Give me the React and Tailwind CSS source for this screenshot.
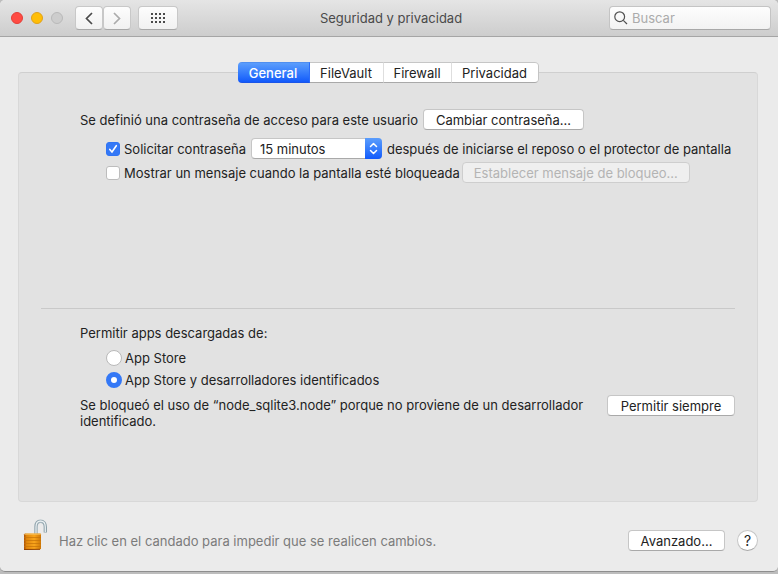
import { useState } from 'react';

const TABS = [
  { name: 'General', width: 'w-[72px]' },
  { name: 'FileVault', width: 'w-[74px]' },
  { name: 'Firewall', width: 'w-[68px]' },
  { name: 'Privacidad', width: 'w-[87px]' },
];

const SOURCES = ['App Store', 'App Store y desarrolladores identificados'];

function PushButton({ className, children, ...props }) {
  return (
    <button
      type="button"
      className={`h-[21px] shrink-0 whitespace-nowrap rounded-[4px] border border-[#c6c6c6] border-b-[#a9a9a9] bg-white text-center leading-4 text-[#222] disabled:border-[#cecece] disabled:bg-[#efefef] disabled:text-[#b4b4b4] ${className}`}
      {...props}
    >
      {children}
    </button>
  );
}

function ToolButton({ className, children, ...props }) {
  return (
    <button
      type="button"
      className={`flex h-6 items-center justify-center rounded-[4px] border border-[#c8c8c8] border-b-[#a8a8a8] bg-linear-to-b from-[#fdfdfd] to-[#f1f1f1] ${className}`}
      {...props}
    >
      {children}
    </button>
  );
}

function Toolbar() {
  return (
    <header className="grid h-[37px] grid-cols-[1fr_auto_1fr] items-center border-b border-[#a5a5a5] bg-linear-to-b from-[#e5e5e5] to-[#cdcdcd] pl-[11px] pr-[7px]">
      <div className="flex items-center">
        <div className="flex gap-2">
          <button type="button" aria-label="Cerrar" className="size-3 rounded-full border border-[#e33e38] bg-[#ff4b43]" />
          <button type="button" aria-label="Minimizar" className="size-3 rounded-full border border-[#e0a11a] bg-[#ffbe07]" />
          <button type="button" aria-label="Ampliar" disabled className="size-3 rounded-full border border-[#b9b9b9] bg-[#cdcdcd]" />
        </div>
        <div className="ml-3 flex">
          <ToolButton className="w-7" aria-label="Atrás">
            <svg width="8" height="13" viewBox="0 0 8 13" fill="none" stroke="#4a4a4a" strokeWidth="1.7">
              <path d="M7 1 1.5 6.5 7 12" />
            </svg>
          </ToolButton>
          <ToolButton className="w-7" aria-label="Adelante">
            <svg width="8" height="13" viewBox="0 0 8 13" fill="none" stroke="#ababab" strokeWidth="1.7">
              <path d="M1 1 6.5 6.5 1 12" />
            </svg>
          </ToolButton>
        </div>
        <ToolButton className="ml-[7px] w-10" aria-label="Mostrar todo">
          <svg width="14" height="10" viewBox="0 0 14 10" fill="#4a4a4a">
            {[0, 4, 8].map((y) =>
              [0, 4, 8, 12].map((x) => <rect key={`${x}-${y}`} x={x} y={y} width="2" height="2" />)
            )}
          </svg>
        </ToolButton>
      </div>
      <h1 className="text-[#4a4a4a]">Seguridad y privacidad</h1>
      <label className="flex h-6 w-[162px] items-center gap-1 justify-self-end rounded-[4px] border border-[#c4c4c4] border-b-[#a8a8a8] bg-linear-to-b from-[#fdfdfd] to-[#f2f2f2] pl-1">
        <svg width="14" height="14" viewBox="0 0 14 14" fill="none" stroke="#505050" strokeWidth="1.2" className="shrink-0">
          <circle cx="5.7" cy="5.7" r="4.9" />
          <path d="m9.3 9.3 3.7 3.7" />
        </svg>
        <input
          type="search"
          aria-label="Buscar"
          placeholder="Buscar"
          className="w-full min-w-0 bg-transparent outline-none placeholder:text-[#ababab]"
        />
      </label>
    </header>
  );
}

function CheckBox({ label, checked, onChange }) {
  return (
    <label className="flex shrink-0 items-center gap-1 whitespace-nowrap">
      <span className="grid size-[14px] place-items-center">
        <input
          type="checkbox"
          checked={checked}
          onChange={onChange}
          className="col-start-1 row-start-1 size-[14px] appearance-none rounded-[3px] border border-[#bdbdbd] bg-white checked:border-[#2f74f5] checked:bg-[#3478f6]"
        />
        {checked && (
          <svg width="10" height="10" viewBox="0 0 10 10" fill="none" stroke="#fff" strokeWidth="1.6" strokeLinecap="round" className="pointer-events-none col-start-1 row-start-1">
            <path d="M1.8 5.4 4 8 8.3 1.7" />
          </svg>
        )}
      </span>
      {label}
    </label>
  );
}

function Padlock() {
  return (
    <svg width="26" height="32" viewBox="0 0 26 32">
      <defs>
        <linearGradient id="brass" x1="0" x2="1" y1="0" y2="0">
          <stop offset="0" stopColor="#a84e08" />
          <stop offset="0.15" stopColor="#e0860c" />
          <stop offset="0.6" stopColor="#f9a51c" />
          <stop offset="1" stopColor="#cf7806" />
        </linearGradient>
        <linearGradient id="steel" x1="0" x2="1" y1="0" y2="0">
          <stop offset="0" stopColor="#8fa3ac" />
          <stop offset="0.5" stopColor="#a9b9c0" />
          <stop offset="1" stopColor="#8ba0a8" />
        </linearGradient>
      </defs>
      <path d="M14 16V8C14 4.300 15.500 2.200 18.500 2.200S23.300 4.500 23.300 8v5.500" fill="none" stroke="url(#steel)" strokeWidth="3.400" />
      <path d="M14 15V8C14 4.300 15.500 2.200 18.500 2.200S23.300 4.500 23.300 8v5" fill="none" stroke="#edf2f4" strokeWidth="1.200" />
      <path d="M2 15.500 3 14.500H18.500L19 15.500V29.500L18 30.500 2 31Z" fill="url(#brass)" />
      <path d="M2 18.500H19M2 21.500H19M2 24.500H19M2 27.500H19" stroke="#c47308" strokeWidth="0.700" />
      <path d="M2.500 15.200H18.800" stroke="#f7c05a" strokeWidth="1" />
      <path d="M2 30.500 18 30.300" stroke="#8f4204" strokeWidth="1" />
    </svg>
  );
}

export default function App() {
  const [tab, setTab] = useState('General');
  const [askPassword, setAskPassword] = useState(true);
  const [showMessage, setShowMessage] = useState(false);
  const [delay, setDelay] = useState('15 minutos');
  const [source, setSource] = useState(SOURCES[1]);

  return (
    <div className="min-h-screen bg-[#bdbdbd] pb-[2px] font-['Inter','Liberation_Sans',sans-serif] text-[13px] leading-4 text-[#222]">
      <div className="flex min-h-[calc(100vh-2px)] flex-col overflow-hidden rounded-[5px] border-b border-[#8e8e8e] bg-[#ebebeb]">
        <Toolbar />

        <main className="ml-[18px] mr-5 mt-[35px] flex-1 rounded-[4px] border border-[#d8d8d8] border-t-[#cfcfcf] bg-[#e2e2e2] px-[22px]">
          <div role="tablist" className="mx-auto -mt-[11px] flex h-[21px] w-fit overflow-hidden rounded-[4px]">
            {TABS.map(({ name, width }) => (
              <button
                key={name}
                type="button"
                role="tab"
                aria-selected={tab === name}
                onClick={() => setTab(name)}
                className={`border-b border-t border-r last:rounded-r-[4px] last:border-r-[#c4c4c4] ${width} ${
                  tab === name
                    ? 'border-b-[#1a55e8] border-r-[#2a6cf8] border-t-[#4f8ff0] bg-linear-to-b from-[#5b9dfc] to-[#1259fb] font-medium text-white'
                    : 'border-b-[#a9a9a9] border-r-[#dedede] border-t-[#c6c6c6] bg-white'
                }`}
              >
                {name}
              </button>
            ))}
          </div>

          <section className="ml-[39px] mt-[26px]">
            <div className="flex items-center gap-[5px]">
              <p>Se definió una contraseña de acceso para este usuario</p>
              <PushButton className="w-[161px]">Cambiar contraseña…</PushButton>
            </div>
            <div className="ml-[26px] mt-2 flex items-center gap-[5px]">
              <CheckBox label="Solicitar contraseña" checked={askPassword} onChange={(e) => setAskPassword(e.target.checked)} />
              <div className="grid w-[131px] shrink-0">
                <select
                  aria-label="Tiempo de espera"
                  value={delay}
                  onChange={(e) => setDelay(e.target.value)}
                  className="col-start-1 row-start-1 h-[21px] appearance-none rounded-[4px] border border-[#c6c6c6] border-b-[#a9a9a9] bg-white pl-2"
                >
                  <option>5 minutos</option>
                  <option>15 minutos</option>
                  <option>1 hora</option>
                </select>
                <span className="pointer-events-none col-start-1 row-start-1 flex h-[21px] w-[17px] items-center justify-center justify-self-end rounded-r-[4px] bg-linear-to-b from-[#5b9dfc] to-[#1259fb]">
                  <svg width="9" height="13" viewBox="0 0 9 13" fill="none" stroke="#fff" strokeWidth="1.500" strokeLinecap="round" strokeLinejoin="round">
                    <path d="M1.500 4.500 4.500 1.500 7.500 4.500M1.500 8.500 4.500 11.500 7.500 8.500" />
                  </svg>
                </span>
              </div>
              <p className="whitespace-nowrap">después de iniciarse el reposo o el protector de pantalla</p>
            </div>
            <div className="ml-[26px] mt-[3px] flex items-center gap-[2px]">
              <CheckBox
                label="Mostrar un mensaje cuando la pantalla esté bloqueada"
                checked={showMessage}
                onChange={(e) => setShowMessage(e.target.checked)}
              />
              <PushButton className="w-[228px]" disabled={!showMessage}>
                Establecer mensaje de bloqueo…
              </PushButton>
            </div>
          </section>

          <hr className="mt-[125px] border-[#c9c9c9]" />

          <section className="ml-[39px] mt-4">
            <fieldset>
              <legend>Permitir apps descargadas de:</legend>
              <div className="ml-[26px] mt-[9px] flex flex-col gap-[6px]">
                {SOURCES.map((name) => (
                  <label key={name} className="flex items-center gap-[3px]">
                    <input
                      type="radio"
                      name="source"
                      checked={source === name}
                      onChange={() => setSource(name)}
                      className="size-4 appearance-none rounded-full border border-[#b9b9b9] bg-white checked:border-[5px] checked:border-[#3478f6]"
                    />
                    {name}
                  </label>
                ))}
              </div>
            </fieldset>
            <div className="mt-[7px] flex items-start justify-between">
              <p className="mt-[2px] max-w-[510px]">
                Se bloqueó el uso de “node_sqlite3.node” porque no proviene de un desarrollador identificado.
              </p>
              <PushButton className="w-32">Permitir siempre</PushButton>
            </div>
          </section>
        </main>

        <footer className="flex items-end pb-5 pl-[22px] pr-5 pt-[17px]">
          <Padlock />
          <p className="ml-[11px] flex-1 pb-[2px] text-[#7b7b7b]">Haz clic en el candado para impedir que se realicen cambios.</p>
          <PushButton className="w-[97px]">Avanzado…</PushButton>
          <button
            type="button"
            aria-label="Ayuda"
            className="ml-3 size-[21px] rounded-full border border-[#c6c6c6] border-b-[#a9a9a9] bg-white text-[14px] leading-4"
          >
            ?
          </button>
        </footer>
      </div>
    </div>
  );
}
